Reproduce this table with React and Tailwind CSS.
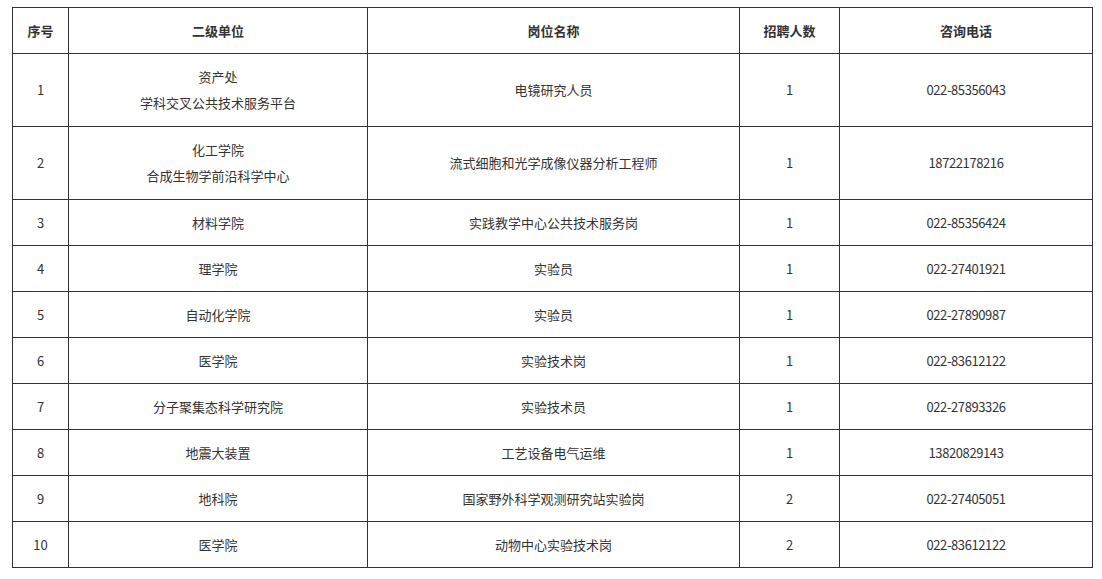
import React from "react";

const rows = [
  ["1", ["资产处", "学科交叉公共技术服务平台"], "电镜研究人员", "1", "022-85356043"],
  ["2", ["化工学院", "合成生物学前沿科学中心"], "流式细胞和光学成像仪器分析工程师", "1", "18722178216"],
  ["3", ["材料学院"], "实践教学中心公共技术服务岗", "1", "022-85356424"],
  ["4", ["理学院"], "实验员", "1", "022-27401921"],
  ["5", ["自动化学院"], "实验员", "1", "022-27890987"],
  ["6", ["医学院"], "实验技术岗", "1", "022-83612122"],
  ["7", ["分子聚集态科学研究院"], "实验技术员", "1", "022-27893326"],
  ["8", ["地震大装置"], "工艺设备电气运维", "1", "13820829143"],
  ["9", ["地科院"], "国家野外科学观测研究站实验岗", "2", "022-27405051"],
  ["10", ["医学院"], "动物中心实验技术岗", "2", "022-83612122"],
];

const td = "border border-[#333] text-center align-middle p-0";

export default function App() {
  return (
    <div
      className="w-[1102px] h-[579px] bg-white pt-[7px] pl-[12px] text-[#333] text-[13px]"
      style={{ fontFamily: '"Noto Sans CJK SC", "Noto Sans", sans-serif' }}
    >
      <table className="border-collapse table-fixed w-[1080px]">
        <colgroup>
          <col className="w-[56px]" />
          <col className="w-[299px]" />
          <col className="w-[372px]" />
          <col className="w-[100px]" />
          <col className="w-[253px]" />
        </colgroup>
        <thead>
          <tr className="h-[46px]">
            <th className={td + " font-bold"}>序号</th>
            <th className={td + " font-bold"}>二级单位</th>
            <th className={td + " font-bold"}>岗位名称</th>
            <th className={td + " font-bold"}>招聘人数</th>
            <th className={td + " font-bold"}>咨询电话</th>
          </tr>
        </thead>
        <tbody>
          {rows.map((r) => (
            <tr key={r[0]} className={r[1].length > 1 ? "h-[73px]" : "h-[46px]"}>
              <td className={td}>{r[0]}</td>
              <td className={td + " leading-[26px]"}>
                {r[1].map((l) => (
                  <div key={l}>{l}</div>
                ))}
              </td>
              <td className={td}>{r[2]}</td>
              <td className={td}>{r[3]}</td>
              <td className={td + " tracking-[-0.4px]"}>{r[4]}</td>
            </tr>
          ))}
        </tbody>
      </table>
    </div>
  );
}
